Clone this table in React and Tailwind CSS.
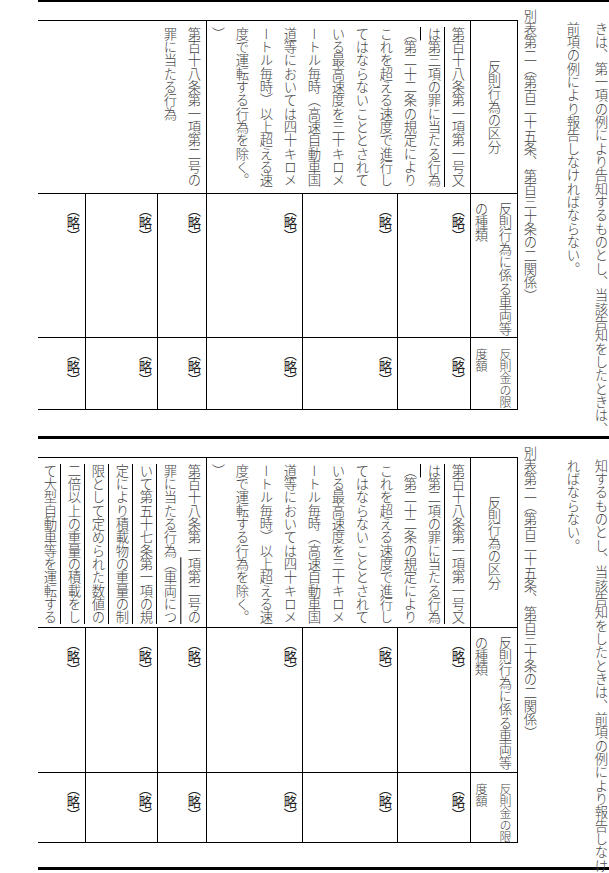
import React from "react";

const U = ({ children }) => (
  <span className="underline decoration-black decoration-1 [text-underline-position:right] underline-offset-[1px]">
    {children}
  </span>
);

function Ryaku() {
  return (
    <div className="border-r border-b border-black">
      <div className="[writing-mode:vertical-rl] whitespace-nowrap w-full h-full pt-[9px] text-[#222] font-normal">（略）</div>
    </div>
  );
}

function Panel({ panelCls, rowsCls, cellA, cellB, para }) {
  return (
    <div className={`ml-[38px] border-t-[3px] border-black flex items-start ${panelCls}`}>
      <div
        className={`mt-[18px] w-[480px] shrink-0 grid grid-cols-[48px_72px_49px_96px_95px_73px_47px] border-t border-black ${rowsCls}`}
      >
        {/* header row */}
        <div className="col-span-3 border-r border-b border-black">
          <div className="[writing-mode:vertical-rl] whitespace-nowrap w-full h-full pt-[6px]">{cellA}</div>
        </div>
        <div className="col-span-3 border-r border-b border-black">
          <div className="[writing-mode:vertical-rl] whitespace-nowrap w-full h-full pt-[6px]">{cellB}</div>
        </div>
        <div className="border-r border-b border-black flex items-center justify-center">
          <div className="[writing-mode:vertical-rl] whitespace-nowrap">反則行為の区分</div>
        </div>
        {/* vehicle row */}
        <Ryaku />
        <Ryaku />
        <Ryaku />
        <Ryaku />
        <Ryaku />
        <Ryaku />
        <div className="border-r border-b border-black">
          <div className="[writing-mode:vertical-rl] whitespace-nowrap w-full h-full pt-[8px]">
            反則行為に係る車両等
            <br />
            の種類
          </div>
        </div>
        {/* amount row */}
        <Ryaku />
        <Ryaku />
        <Ryaku />
        <Ryaku />
        <Ryaku />
        <Ryaku />
        <div className="border-r border-b border-black">
          <div className="[writing-mode:vertical-rl] whitespace-nowrap w-full h-full pt-[10px] text-[12px]">
            反則金の限
            <br />
            度額
          </div>
        </div>
      </div>
      <div className="[writing-mode:vertical-rl] whitespace-nowrap w-[24px] shrink-0 mt-[7px]">
        別表第二（第百二十五条、第百三十条の二関係）
      </div>
      <div className="[writing-mode:vertical-rl] whitespace-nowrap shrink-0 ml-[17px] mt-[20px] leading-[28px]">
        {para}
      </div>
    </div>
  );
}

export default function App() {
  return (
    <div className="w-[609px] h-[873px] overflow-hidden bg-white text-[#444] font-light text-[13.33px] leading-[24px] font-['Noto_Sans_CJK_JP','Noto_Sans_CJK_SC',sans-serif]">
      <Panel
        panelCls="h-[437px] -mt-px"
        rowsCls="grid-rows-[173px_144px_72px]"
        cellA={
          <>
            第百十八条第一項第二号の
            <br />
            罪に当たる行為
          </>
        }
        cellB={
          <>
            第百十八条第一項第一号又
            <br />
            <U>
              は第三項の罪に当たる行為
              <br />（
            </U>
            第二十二条の規定により
            <br />
            これを超える速度で進行し
            <br />
            てはならないこととされて
            <br />
            いる最高速度を三十キロメ
            <br />
            ートル毎時（高速自動車国
            <br />
            道等においては四十キロメ
            <br />
            ートル毎時）以上超える速
            <br />
            度で運転する行為を除く。
            <br />）
          </>
        }
        para={
          <>
            きは、第一項の例により告知するものとし、当該告知をしたときは、
            <br />
            前項の例により報告しなければならない。
          </>
        }
      />
      <Panel
        panelCls="h-[431px]"
        rowsCls="grid-rows-[170px_145px_70px]"
        cellA={
          <>
            第百十八条第一項第二号の
            <br />
            罪に当たる行為
            <U>
              （車両につ
              <br />
              いて第五十七条第一項の規
              <br />
              定により積載物の重量の制
              <br />
              限として定められた数値の
              <br />
              二倍以上の重量の積載をし
              <br />
              て大型自動車等を運転する
            </U>
          </>
        }
        cellB={
          <>
            第百十八条第一項第一号又
            <br />
            <U>
              は第二項の罪に当たる行為
              <br />（
            </U>
            第二十二条の規定により
            <br />
            これを超える速度で進行し
            <br />
            てはならないこととされて
            <br />
            いる最高速度を三十キロメ
            <br />
            ートル毎時（高速自動車国
            <br />
            道等においては四十キロメ
            <br />
            ートル毎時）以上超える速
            <br />
            度で運転する行為を除く。
            <br />）
          </>
        }
        para={
          <>
            知するものとし、当該告知をしたときは、前項の例により報告しなけ
            <br />
            ればならない。
          </>
        }
      />
      <div className="ml-[38px] border-t-[3px] border-black" />
    </div>
  );
}
